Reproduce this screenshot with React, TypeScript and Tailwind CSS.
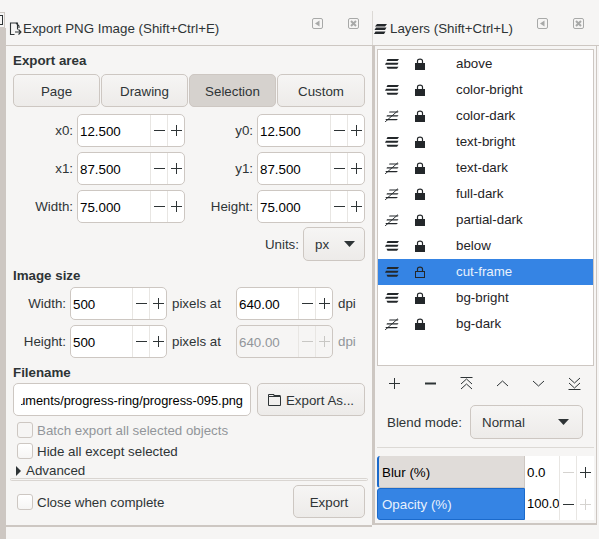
import React from "react";

const Minus = ({ c = "#2e3436" }: { c?: string }) => (
  <svg width="13" height="13" viewBox="0 0 13 13"><path d="M1 6.5H12" stroke={c} strokeWidth="1" /></svg>
);
const Plus = ({ c = "#2e3436" }: { c?: string }) => (
  <svg width="13" height="13" viewBox="0 0 13 13"><path d="M1 6.5H12M6.5 1V12" stroke={c} strokeWidth="1" /></svg>
);

function Spin({ v, w = 108, disabled = false }: { v: string; w?: number; disabled?: boolean }) {
  const c = disabled ? "#c8c7c4" : "#2e3436";
  return (
    <div
      className={`flex h-[33px] shrink-0 rounded-[5px] border border-[#cdc7c2] ${disabled ? "bg-[#f6f5f4] text-[#92959a]" : "bg-white text-black"}`}
      style={{ width: w }}
    >
      <div className="flex-1 pl-[2px] pt-[1px] leading-[31px] min-w-0">{v}</div>
      <div className="w-[17px] flex items-center justify-center border-l border-[#e8e6e3]"><Minus c={c} /></div>
      <div className="w-[17px] flex items-center justify-center border-l border-[#e8e6e3]"><Plus c={c} /></div>
    </div>
  );
}

function Btn({ children, className = "", active = false }: { children: React.ReactNode; className?: string; active?: boolean }) {
  return (
    <div
      className={`flex items-center justify-center rounded-[5px] border border-[#cdc7c2] h-[33px] pt-[2px] text-[#2e3436] ${active ? "bg-[#d6d2ce]" : "bg-gradient-to-b from-[#f6f5f4] to-[#edebe9]"} ${className}`}
    >
      {children}
    </div>
  );
}

const Caret = () => (
  <svg width="11" height="6" viewBox="0 0 11 6"><path d="M0 0H11L5.5 6Z" fill="#2e3436" /></svg>
);

function Check({ label, disabled = false }: { label: string; disabled?: boolean }) {
  return (
    <div className={`flex items-center h-[16px] pl-[4px] ${disabled ? "text-[#92959a]" : "text-[#2e3436]"}`}>
      <div className={`w-[16px] h-[16px] rounded-[3px] border border-[#cdc7c2] mr-[4px] ${disabled ? "bg-[#f6f5f4]" : "bg-gradient-to-b from-[#ffffff] to-[#f6f5f4]"}`} />
      <span className="pt-[2px]">{label}</span>
    </div>
  );
}

const DockIcons = () => (
  <div className="flex gap-[25px] items-center">
    <svg width="11" height="11" viewBox="0 0 11 11">
      <rect x="0.5" y="0.5" width="10" height="10" rx="1.5" fill="none" stroke="#a8a9a8" />
      <path d="M7.5 2.5V8.5L3 5.5Z" fill="#a8a9a8" />
    </svg>
    <svg width="11" height="11" viewBox="0 0 11 11">
      <rect x="0.5" y="0.5" width="10" height="10" rx="1.5" fill="none" stroke="#a8a9a8" />
      <path d="M3 3L8 8M8 3L3 8" stroke="#a8a9a8" strokeWidth="2" />
    </svg>
  </div>
);

const Eye = ({ off }: { off: boolean }) =>
  off ? (
    <svg width="14" height="12" viewBox="0 0 14 12" className="shrink-0">
      <path d="M4.5 1.6H13.5L13 2.6H4Z" fill="#23272a" />
      <path d="M2 5.2H13.5L12.5 6.4H1.5Z" fill="#23272a" />
      <path d="M0.5 9H13L11.5 10.2H1Z" fill="#23272a" />
      <path d="M0 12L13 0.6" stroke="#23272a" strokeWidth="0.9" />
    </svg>
  ) : (
    <svg width="14" height="12" viewBox="0 0 14 12" className="shrink-0">
      <path d="M2.5 1H14L12.5 3H1.5Z" fill="#23272a" />
      <path d="M1 4.8H13.5L12.5 6.8H0Z" fill="#23272a" />
      <path d="M1.5 8.8H13.5L12 10.8H2.5Z" fill="#23272a" />
    </svg>
  );

const Lock = ({ open }: { open: boolean }) => (
  <svg width="10" height="12" viewBox="0 0 10 12" className="shrink-0">
    <path d="M2.5 5V3C2.5 0.4 7.5 0.4 7.5 3V5" fill="none" stroke="#23272a" strokeWidth="1.2" />
    {open ? (
      <rect x="0.5" y="5.5" width="9" height="6" fill="none" stroke="#23272a" />
    ) : (
      <rect x="0" y="5" width="10" height="7" fill="#23272a" />
    )}
  </svg>
);

const layers: [string, boolean][] = [
  ["above", false],
  ["color-bright", false],
  ["color-dark", true],
  ["text-bright", false],
  ["text-dark", true],
  ["full-dark", true],
  ["partial-dark", true],
  ["below", false],
  ["cut-frame", false],
  ["bg-bright", false],
  ["bg-dark", true],
];

const Label = ({ w, children }: { w: number; children: React.ReactNode }) => (
  <div className="text-right pr-[4px] pt-[1px] shrink-0 text-[#2e3436]" style={{ width: w }}>{children}</div>
);

function CoordRow({ a, av, b, bv }: { a: string; av: string; b: string; bv: string }) {
  return (
    <div className="flex items-center">
      <Label w={64}>{a}</Label>
      <Spin v={av} />
      <Label w={72}>{b}</Label>
      <Spin v={bv} />
    </div>
  );
}

function SizeRow({ a, v, dpi, disabled = false }: { a: string; v: string; dpi: string; disabled?: boolean }) {
  return (
    <div className="flex items-center">
      <Label w={57}>{a}</Label>
      <Spin v={v} w={97} />
      <div className="w-[69px] pl-[5px] pt-[1px] text-[#2e3436]">pixels at</div>
      <Spin v={dpi} w={97} disabled={disabled} />
      <div className={`pl-[5px] pt-[1px] ${disabled ? "text-[#92959a]" : "text-[#2e3436]"}`}>dpi</div>
    </div>
  );
}

const Tool = ({ d, w = 1 }: { d: string; w?: number }) => (
  <svg width="13" height="13" viewBox="0 0 13 13">
    <path d={d} fill="none" stroke="#2e3436" strokeWidth={w} />
  </svg>
);

export default function App() {
  return (
    <div
      className="flex w-[599px] h-[539px] overflow-hidden bg-[#f6f5f4] text-[13.33px] leading-[16px] text-[#2e3436]"
      style={{ fontFamily: '"Liberation Sans", sans-serif' }}
    >
      {/* far-left strip */}
      <div className="w-[6px] shrink-0 flex flex-col">
        <div className="h-[12px]" />
        <div className="h-[16px] w-[5px] bg-[#f6f5f4] border border-l-0 border-[#cdc7c2] flex items-center">
          <div className="w-[3px] h-[10px] border-y border-r border-[#2e3436]" />
        </div>
        <div className="flex-1 bg-[#cdc7c2]" />
      </div>

      {/* export panel */}
      <div className="w-[366px] shrink-0 flex flex-col">
        <div className="h-[46px] shrink-0 border-b border-[#cdc7c2] flex pl-[3px] pr-[13px]">
          <div className="flex items-center pt-[13px] flex-1 text-[#2e3436]">
            <svg width="13" height="14" viewBox="0 0 13 14">
              <path d="M8 7.5V1H1V12.5H5" transform="translate(0.5 0)" fill="none" stroke="#2e3436" strokeWidth="1.1" />
              <path d="M7 1L10 4V6" fill="none" stroke="#2e3436" strokeWidth="1.1" />
              <path d="M6 10H12M9.5 7.5L12 10L9.5 12.5" fill="none" stroke="#2e3436" strokeWidth="1.1" />
            </svg>
            <span className="ml-[1px]">Export PNG Image (Shift+Ctrl+E)</span>
          </div>
          <div className="pt-[18px]"><DockIcons /></div>
        </div>

        <div className="flex-1 flex flex-col px-[7px] min-h-0">
          <div className="font-bold h-[16px] mt-[7px] text-[#2e3436]">Export area</div>
          <div className="flex gap-[1px] mt-[5px]">
            <Btn className="w-[87px]">Page</Btn>
            <Btn className="w-[87px]">Drawing</Btn>
            <Btn className="w-[87px]" active>Selection</Btn>
            <Btn className="w-[88px]">Custom</Btn>
          </div>
          <div className="flex flex-col gap-[5px] mt-[7px]">
            <CoordRow a="x0:" av="12.500" b="y0:" bv="12.500" />
            <CoordRow a="x1:" av="87.500" b="y1:" bv="87.500" />
            <CoordRow a="Width:" av="75.000" b="Height:" bv="75.000" />
          </div>
          <div className="flex items-center justify-end mt-[4px] h-[34px]">
            <span className="mr-[4px] pt-[2px]">Units:</span>
            <div className="flex items-center justify-between w-[62px] h-[34px] rounded-[5px] border border-[#cdc7c2] bg-gradient-to-b from-[#f6f5f4] to-[#edebe9] pl-[11px] pr-[9px]">
              <span className="pt-[2px]">px</span>
              <Caret />
            </div>
          </div>
          <div className="font-bold h-[16px] mt-[7px]">Image size</div>
          <div className="flex flex-col gap-[5px] mt-[3px]">
            <SizeRow a="Width:" v="500" dpi="640.00" />
            <SizeRow a="Height:" v="500" dpi="640.00" disabled />
          </div>
          <div className="font-bold h-[16px] mt-[7px]">Filename</div>
          <div className="flex gap-[6px] mt-[2px]">
            <div className="w-[238px] h-[33px] rounded-[5px] border border-[#cdc7c2] bg-white text-black pl-[7px] pr-[7px] pt-[1px] leading-[31px] text-[12.8px]">
              <div className="overflow-hidden flex justify-end whitespace-nowrap">uments/progress-ring/progress-095.png</div>
            </div>
            <Btn className="w-[108px] gap-[5px]">
              <svg width="13" height="12" viewBox="0 0 13 12" className="-mt-[2px]">
                <path d="M0.5 2.5H12.5V11.5H0.5ZM0.5 0.5H6V2.5H0.5Z" fill="none" stroke="#2e3436" />
                <path d="M6 1H12.5V3H6Z" fill="#2e3436" />
              </svg>
              <span>Export As...</span>
            </Btn>
          </div>
          <div className="flex flex-col gap-[5px] mt-[6px]">
            <Check label="Batch export all selected objects" disabled />
            <Check label="Hide all except selected" />
          </div>
          <div className="flex items-center h-[16px] mt-[4px] pl-[3px] gap-[5px]">
            <svg width="5" height="10" viewBox="0 0 5 10"><path d="M0 0L5 5L0 10Z" fill="#2e3436" /></svg>
            <span>Advanced</span>
          </div>
          <div className="h-[3px] -mx-[3px] -mt-[1px] border border-[#d9d5d1] rounded-[2px]" />
          <div className="flex items-center justify-between mt-[4px]">
            <Check label="Close when complete" />
            <Btn className="w-[72px]">Export</Btn>
          </div>
        </div>
        <div className="h-[2px] mb-[12px] bg-[#cdc7c2]" />
      </div>

      {/* layers panel */}
      <div className="flex-1 flex flex-col">
        <div className="h-[46px] shrink-0 flex items-end pr-[3px] border-b border-[#cdc7c2]">
          <div className="flex-1 h-[34px] flex items-start border-l border-[#dcd9d5] pl-[1px] pr-[12px]">
            <div className="flex-1 flex items-center gap-[3px] h-[34px] pt-[1px]">
              <svg width="13" height="12" viewBox="0 0 13 12" className="shrink-0">
                <path d="M3 1H13L11 3.4H1Z M2 4.6H12.5L11 7H0.5Z M1.5 8.4H11.5L10 11H0Z" fill="#23272a" />
              </svg>
              <span>Layers (Shift+Ctrl+L)</span>
            </div>
            <div className="pt-[7px]"><DockIcons /></div>
          </div>
        </div>
        <div className="flex-1 flex flex-col min-h-0">
          <div className="h-[479px] mb-[14px] mr-[2px] border-l-[3px] border-l-[#cdc7c2] border-r border-r-[#cdc7c2] border-b-2 border-b-[#cdc7c2] flex flex-col px-[2px]">
            <div className="h-[317px] mt-[3px] shrink-0 border border-[#cdc7c2] bg-white pt-[1px]">
              {layers.map(([name, off]) => {
                const sel = name === "cut-frame";
                return (
                  <div key={name} className={`h-[26px] flex items-center ${sel ? "bg-[#3584e4] text-[#e8f1fc]" : "text-[#1f2427]"}`}>
                    <div className="w-[37px] pl-[7px] shrink-0"><Eye off={off} /></div>
                    <div className="w-[41px] shrink-0"><Lock open={sel} /></div>
                    <span>{name}</span>
                  </div>
                );
              })}
            </div>
            <div className="flex h-[13px] mt-[11px] pl-[11px] gap-[23px] items-center shrink-0">
              <Tool d="M1 6.5H12M6.5 1V12" />
              <Tool d="M1 6.5H12" w={2} />
              <Tool d="M0.5 0.5H12.5M1 7L6.5 2L12 7M1 12L6.5 7L12 12" />
              <Tool d="M1 9L6.5 4L12 9" />
              <Tool d="M1 4L6.5 9L12 4" />
              <Tool d="M1 1L6.5 6L12 1M1 6L6.5 11L12 6M0.5 12.5H12.5" />
            </div>
            <div className="flex items-center h-[34px] mt-[15px] pl-[10px] shrink-0">
              <span className="w-[83px] pt-[2px]">Blend mode:</span>
              <div className="w-[113px] h-[34px] flex items-center justify-between rounded-[5px] border border-[#cdc7c2] bg-gradient-to-b from-[#f6f5f4] to-[#edebe9] pl-[11px] pr-[13px]">
                <span className="pt-[2px]">Normal</span>
                <Caret />
              </div>
            </div>
            <div className="h-px bg-[#dcd9d5] mt-[8px] shrink-0" />
            <div className="mt-[8px] flex flex-col shrink-0">
              <div className="flex h-[32px] bg-white">
                <div className="w-[148px] bg-[#e0dcd9] border-l-2 border-l-[#1b6acb] border-r border-b border-[#cdc7c2] rounded-l-[3px] pl-[3px] pt-[1px] leading-[31px] text-black">Blur (%)</div>
                <div className="w-[34px] pl-[2px] pt-[1px] leading-[32px] text-black">0.0</div>
                <div className="w-[17px] flex items-center justify-center border-l border-[#e8e6e3]"><Minus c="#d5d3d0" /></div>
                <div className="w-[17px] flex items-center justify-center border-l border-[#e8e6e3]"><Plus /></div>
              </div>
              <div className="flex h-[32px] bg-white">
                <div className="w-[148px] bg-[#3584e4] border border-[#1b6acb] rounded-l-[3px] pl-[4px] leading-[31px] text-[#e8f1fc]">Opacity (%)</div>
                <div className="w-[34px] pl-[2px] leading-[32px] text-black text-[13px] whitespace-nowrap">100.0</div>
                <div className="w-[17px] flex items-center justify-center border-l border-[#e8e6e3]"><Minus /></div>
                <div className="w-[17px] flex items-center justify-center border-l border-[#e8e6e3]"><Plus c="#d5d3d0" /></div>
              </div>
            </div>
          </div>
        </div>
      </div>
    </div>
  );
}
